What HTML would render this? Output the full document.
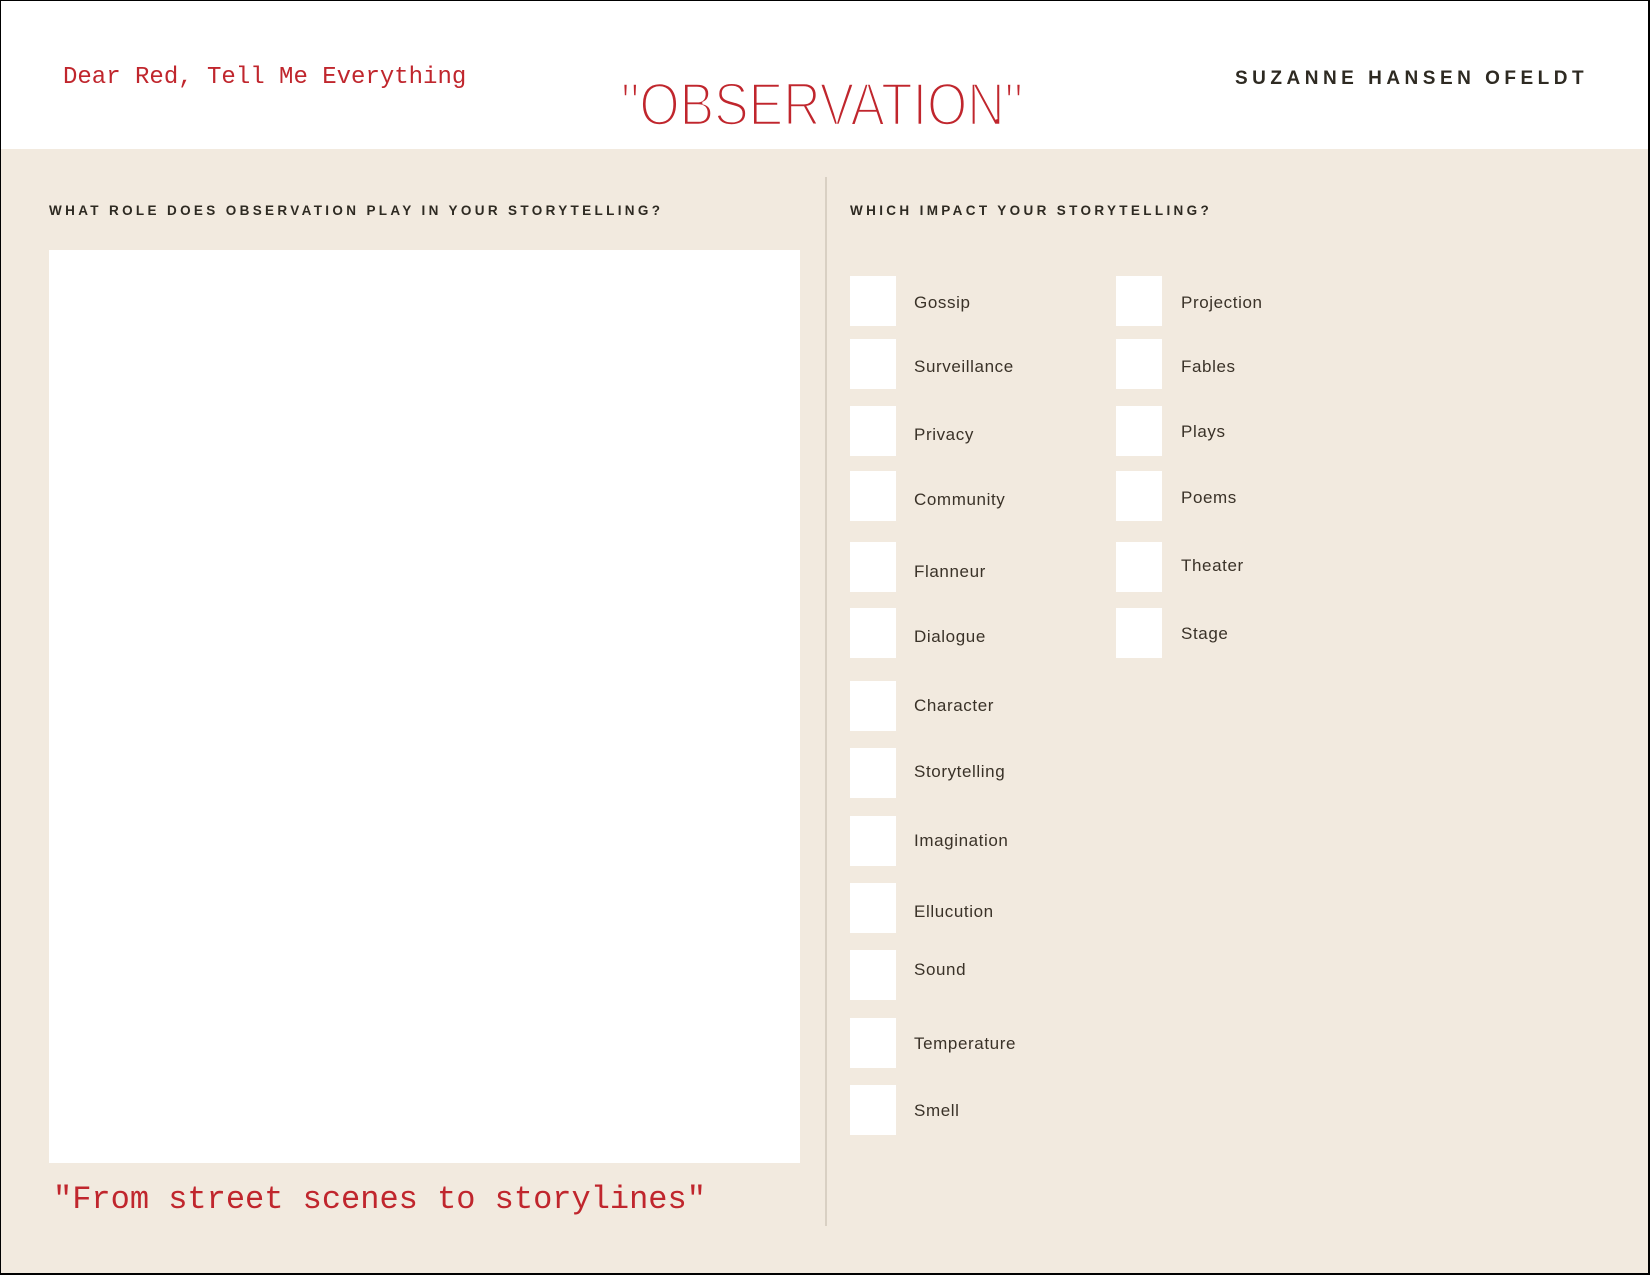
<!DOCTYPE html>
<html><head><meta charset="utf-8"><style>
*{margin:0;padding:0;box-sizing:border-box}
body{width:1650px;height:1275px;position:relative;background:#f2eadf;overflow:hidden;font-family:"Liberation Sans",sans-serif}
.frame{position:absolute;left:0;top:0;width:1650px;height:1275px;border:1px solid #000;border-right-width:2px;border-bottom-width:2px;pointer-events:none;z-index:5}
.hdr{position:absolute;left:0;top:0;width:1650px;height:149px;background:#fff}
.t1{position:absolute;left:63px;top:64px;font:24px "Liberation Mono",monospace;color:#c0262d;white-space:nowrap}
.auth{position:absolute;left:1235px;top:68px;font-weight:bold;font-size:19px;letter-spacing:4.5px;color:#2e2a22;white-space:nowrap}
.div{position:absolute;left:825px;top:177px;width:2px;height:1049px;background:#d9d0c3}
.h{position:absolute;font-weight:bold;font-size:13.5px;letter-spacing:3.35px;color:#2e2a22;white-space:nowrap}
.box{position:absolute;left:49px;top:250px;width:751px;height:913px;background:#fff}
.q{position:absolute;left:53px;top:1181px;font:32px "Liberation Mono",monospace;color:#c0262d;white-space:nowrap}
.cb{position:absolute;width:46px;height:50px;background:#fff}
.lb{position:absolute;font-size:17px;letter-spacing:0.6px;color:#3a3228;white-space:nowrap;line-height:20px}
</style></head><body>
<div class="hdr"></div>
<div class="t1">Dear Red, Tell Me Everything</div>
<svg style="position:absolute;left:618px;top:70px" width="410" height="62"><text x="3" y="55" font-family="Liberation Sans,sans-serif" font-size="60" fill="#c0262d" stroke="#fff" stroke-width="2.6" textLength="402" lengthAdjust="spacingAndGlyphs">"OBSERVATION"</text></svg>
<div class="auth">SUZANNE HANSEN OFELDT</div>
<div class="div"></div>
<div class="h" style="left:49px;top:203px">WHAT ROLE DOES OBSERVATION PLAY IN YOUR STORYTELLING?</div>
<div class="h" style="left:850px;top:203px">WHICH IMPACT YOUR STORYTELLING?</div>
<div class="box"></div>
<div class="q">"From street scenes to storylines"</div>

<div class="cb" style="left:850px;top:276px"></div><div class="lb" style="left:914px;top:293px">Gossip</div>
<div class="cb" style="left:850px;top:339px"></div><div class="lb" style="left:914px;top:357px">Surveillance</div>
<div class="cb" style="left:850px;top:406px"></div><div class="lb" style="left:914px;top:425px">Privacy</div>
<div class="cb" style="left:850px;top:471px"></div><div class="lb" style="left:914px;top:490px">Community</div>
<div class="cb" style="left:850px;top:542px"></div><div class="lb" style="left:914px;top:562px">Flanneur</div>
<div class="cb" style="left:850px;top:608px"></div><div class="lb" style="left:914px;top:627px">Dialogue</div>
<div class="cb" style="left:850px;top:681px"></div><div class="lb" style="left:914px;top:696px">Character</div>
<div class="cb" style="left:850px;top:748px"></div><div class="lb" style="left:914px;top:762px">Storytelling</div>
<div class="cb" style="left:850px;top:816px"></div><div class="lb" style="left:914px;top:831px">Imagination</div>
<div class="cb" style="left:850px;top:883px"></div><div class="lb" style="left:914px;top:902px">Ellucution</div>
<div class="cb" style="left:850px;top:950px"></div><div class="lb" style="left:914px;top:960px">Sound</div>
<div class="cb" style="left:850px;top:1018px"></div><div class="lb" style="left:914px;top:1034px">Temperature</div>
<div class="cb" style="left:850px;top:1085px"></div><div class="lb" style="left:914px;top:1101px">Smell</div>

<div class="cb" style="left:1116px;top:276px"></div><div class="lb" style="left:1181px;top:293px">Projection</div>
<div class="cb" style="left:1116px;top:339px"></div><div class="lb" style="left:1181px;top:357px">Fables</div>
<div class="cb" style="left:1116px;top:406px"></div><div class="lb" style="left:1181px;top:422px">Plays</div>
<div class="cb" style="left:1116px;top:471px"></div><div class="lb" style="left:1181px;top:488px">Poems</div>
<div class="cb" style="left:1116px;top:542px"></div><div class="lb" style="left:1181px;top:556px">Theater</div>
<div class="cb" style="left:1116px;top:608px"></div><div class="lb" style="left:1181px;top:624px">Stage</div>
<div class="frame"></div>
</body></html>
